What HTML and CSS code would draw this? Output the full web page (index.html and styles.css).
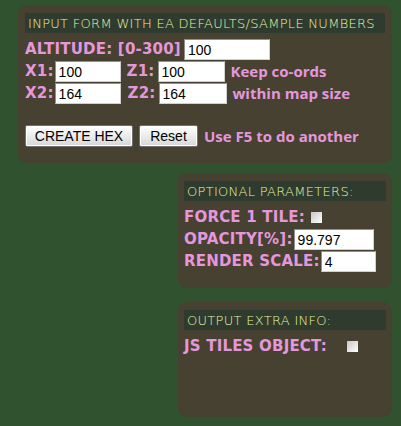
FILE: index.html
```html
<!DOCTYPE html>
<html>
<head>
<meta charset="utf-8">
<link rel="stylesheet" href="styles.css">
</head>
<body>
<div class="page">
  <section class="panel panel-main">
    <div class="panel-head">INPUT FORM WITH EA DEFAULTS/SAMPLE NUMBERS</div>
    <div class="row">
      <span class="lbl">ALTITUDE: [0-300]</span>
      <input class="field w-alt" type="text" value="100">
    </div>
    <div class="row">
      <span class="lbl">X1:</span>
      <input class="field tight w-x1" type="text" value="100">
      <span class="lbl gap-l">Z1:</span>
      <input class="field w-z1" type="text" value="100">
      <span class="lbl note">Keep co-ords</span>
    </div>
    <div class="row">
      <span class="lbl">X2:</span>
      <input class="field tight w-x2" type="text" value="164">
      <span class="lbl gap-l2">Z2:</span>
      <input class="field w-z2" type="text" value="164">
      <span class="lbl note">within map size</span>
    </div>
    <div class="row btn-row">
      <button class="btn btn-create" type="button">CREATE HEX</button>
      <button class="btn btn-reset" type="button">Reset</button>
      <span class="lbl note">Use F5 to do another</span>
    </div>
  </section>

  <section class="panel panel-side">
    <div class="panel-head">OPTIONAL PARAMETERS:</div>
    <div class="row row-check">
      <span class="lbl">FORCE 1 TILE:</span>
      <span class="check"></span>
    </div>
    <div class="row">
      <span class="lbl">OPACITY[%]:</span>
      <input class="field tight w-op" type="text" value="99.797">
    </div>
    <div class="row">
      <span class="lbl">RENDER SCALE:</span>
      <input class="field tight w-rs" type="text" value="4">
    </div>
  </section>

  <section class="panel panel-side panel-out">
    <div class="panel-head">OUTPUT EXTRA INFO:</div>
    <div class="row row-check">
      <span class="lbl">JS TILES OBJECT:</span>
      <span class="check check-js"></span>
    </div>
  </section>
</div>
</body>
</html>
```

FILE: styles.css
```css
html, body {
  margin: 0;
  padding: 0;
}
body {
  background: #30522f;
  width: 401px;
  height: 426px;
  overflow: hidden;
}
.page {
  display: flex;
  flex-direction: column;
  align-items: flex-end;
  padding: 5px 9px 0 18px;
  gap: 10px;
}
.panel {
  box-sizing: border-box;
  background: #464131;
  border-radius: 9px;
  padding: 8px 7px 0 7px;
}
.panel-main {
  width: 374px;
  height: 158px;
  align-self: flex-start;
}
.panel-side {
  width: 214px;
  height: 115px;
  padding: 8px 6px 0 6px;
}
.panel-out {
  margin-top: 4px;
}
.panel-head {
  background: #2f3b2f;
  height: 20px;
  line-height: 21px;
  padding-left: 3px;
  color: #e8f3a0;
  font-family: "DejaVu Sans", sans-serif;
  font-weight: 200;
  font-size: 13px;
  letter-spacing: 0.3px;
  margin-bottom: 5px;
  white-space: nowrap;
  overflow: hidden;
}
.row {
  display: flex;
  align-items: center;
  height: 22px;
}
.lbl {
  font-family: "DejaVu Sans", sans-serif;
  font-weight: bold;
  font-size: 15px;
  letter-spacing: 0.2px;
  color: #e597dc;
  white-space: nowrap;
}
.field {
  box-sizing: border-box;
  height: 21px;
  margin: 0 0 0 3px;
  padding: 1px 3px 0 3px;
  border: 1px solid #8f8f8f;
  border-right-color: #d0d0d0;
  border-bottom-color: #d0d0d0;
  background: #ffffff;
  font-family: "Liberation Sans", Arial, sans-serif;
  font-size: 14px;
  color: #000;
  outline: none;
}
.field.tight { margin-left: 1px; }
.w-alt { width: 86px; }
.w-x1 { width: 66px; }
.w-z1 { width: 67px; }
.w-x2 { width: 66px; }
.w-z2 { width: 68px; }
.w-op { width: 80px; }
.w-rs { width: 55px; }
.gap-l { margin-left: 6px; }
.gap-l2 { margin-left: 7px; }
.note {
  margin-left: 6px;
  font-family: "Open Sans", sans-serif;
  font-weight: 700;
  font-size: 15px;
  letter-spacing: 0;
}
.btn-row {
  margin-top: 20px;
  height: 24px;
}
.btn {
  box-sizing: border-box;
  height: 22px;
  padding: 0 6px;
  margin-right: 6px;
  border: 1px solid #707070;
  border-radius: 2px;
  box-shadow: inset 0 0 0 1px #ffffff;
  background: linear-gradient(#ffffff, #ececec 50%, #d6d6d6);
  font-family: "Liberation Sans", Arial, sans-serif;
  font-size: 14px;
  color: #000;
}
.btn-create { width: 108px; }
.btn-reset { width: 59px; }
.btn-row .note { margin-left: 0; }
.row-check {
  height: 22px;
}
.check {
  display: inline-block;
  width: 11px;
  height: 11px;
  margin-left: 6px;
  background: linear-gradient(135deg, #c8c8c8, #ffffff);
}
.check-js { margin-left: 20px; }
```
